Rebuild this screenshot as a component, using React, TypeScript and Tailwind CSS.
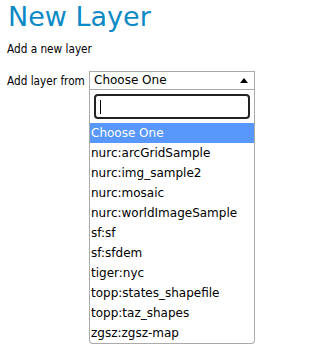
import React from 'react';

const options = [
  'nurc:arcGridSample',
  'nurc:img_sample2',
  'nurc:mosaic',
  'nurc:worldImageSample',
  'sf:sf',
  'sf:sfdem',
  'tiger:nyc',
  'topp:states_shapefile',
  'topp:taz_shapes',
  'zgsz:zgsz-map',
];

export default function App() {
  return (
    <div className="w-[313px] h-[362px] bg-white text-black font-['DejaVu_Sans_Condensed','DejaVu_Sans',sans-serif] px-[7px] pt-[1px]">
      <h1 className="text-[27px] leading-[32px] text-[#0b8ac6] ml-[1px] font-['DejaVu_Sans',sans-serif]">New Layer</h1>

      <p className="text-[11.7px] leading-[15px] mt-[9px]">Add a new layer</p>

      <div className="flex items-start mt-[14px]">
        <span className="text-[11.7px] leading-[15px] mt-[3px] w-[82px] whitespace-nowrap">Add layer from</span>

        {/* select2 style dropdown, open */}
        <div className="w-[166px] text-[12px] font-['DejaVu_Sans',sans-serif]">
          <div className="h-[19px] border border-[#aaa] flex items-center justify-between pl-[4px] pr-[6px] bg-white">
            <span className="leading-[15px]">Choose One</span>
            <svg width="8" height="5" viewBox="0 0 8 5">
              <polygon points="0,5 8,5 4,0" fill="#000" />
            </svg>
          </div>

          <div className="border border-t-0 border-[#aaa] rounded-b-[4px] bg-white">
            <div className="p-[4px]">
              <div className="h-[25px] border-2 border-[#222] rounded-[4px] flex items-center pl-[4px]">
                <div className="w-[1px] h-[14px] bg-black" />
              </div>
            </div>

            <ul>
              <li className="h-[20px] flex items-center px-[1px] bg-[#5897fb] text-white">Choose One</li>
              {options.map((o) => (
                <li key={o} className="h-[20px] flex items-center px-[1px]">
                  {o}
                </li>
              ))}
            </ul>
          </div>
        </div>
      </div>
    </div>
  );
}
